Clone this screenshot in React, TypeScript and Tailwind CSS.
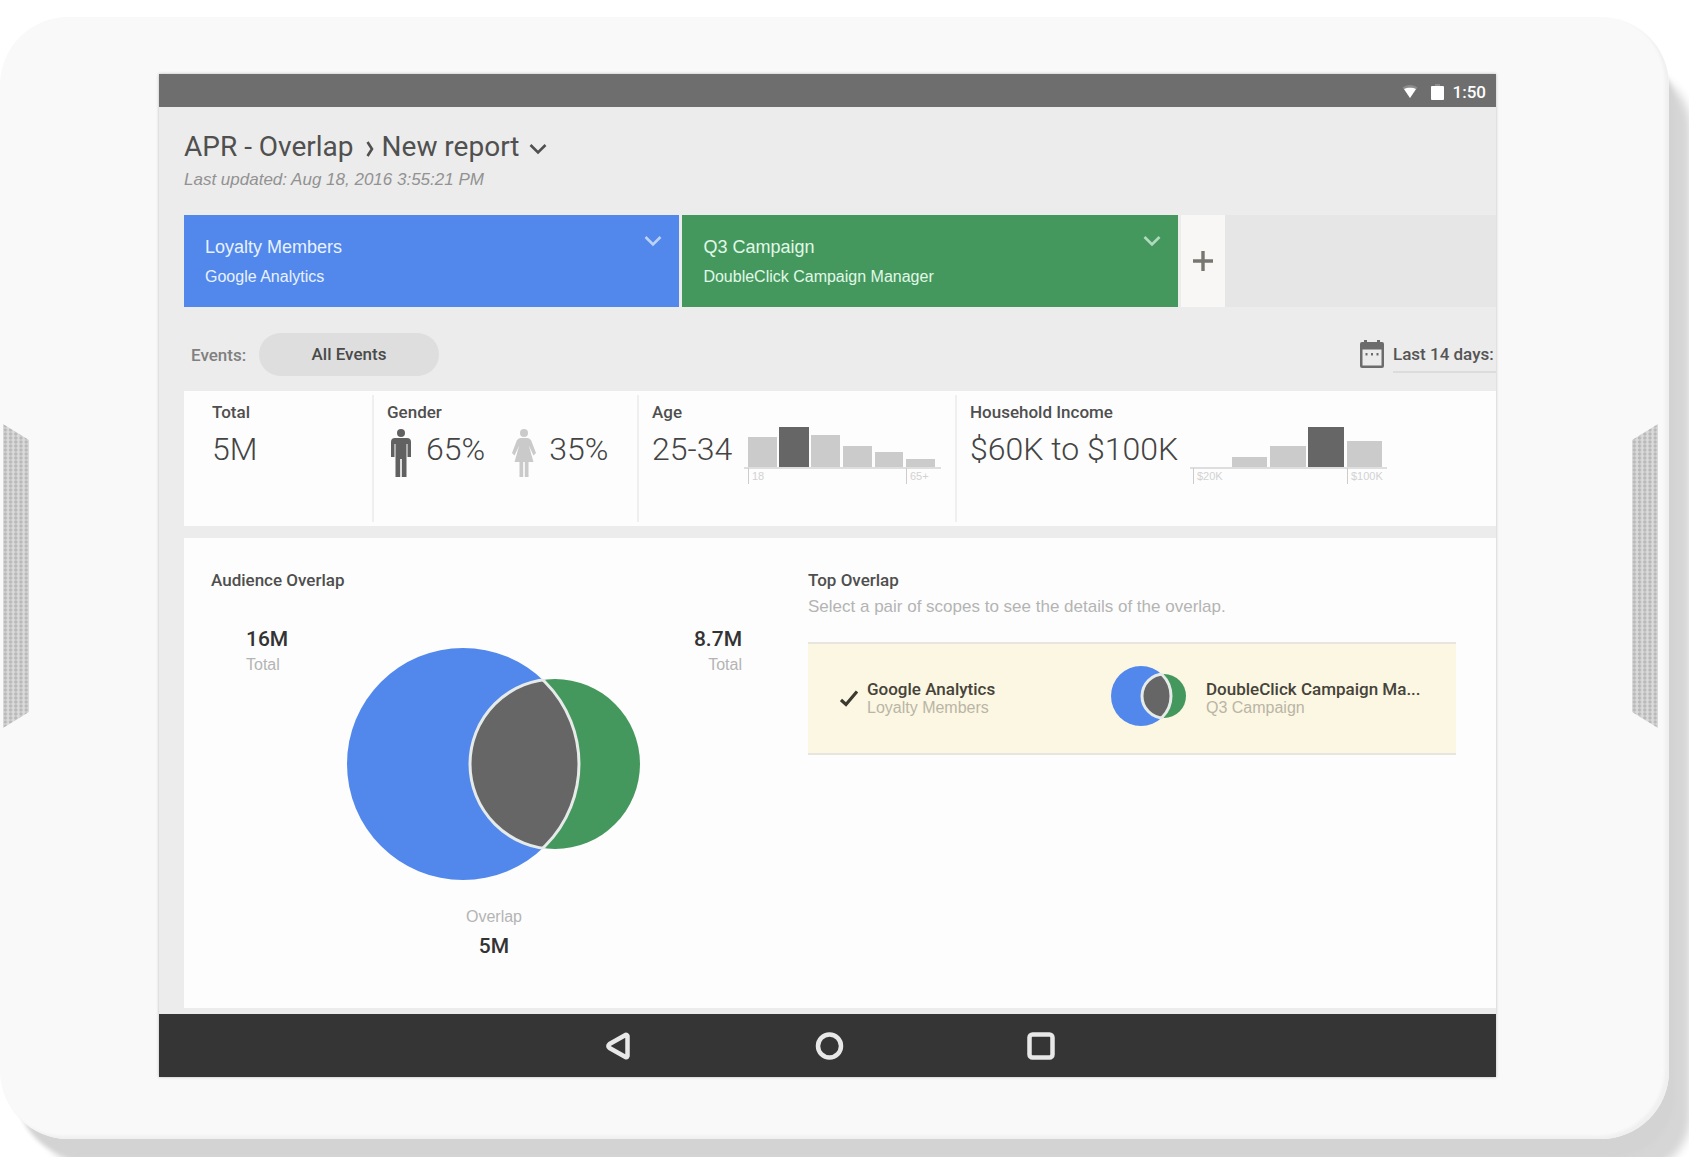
import React from 'react';

const RB = "font-['Roboto',sans-serif]";

type Bar = { x: number; w: number; h: number; active?: boolean };

const ageBars: Bar[] = [
  { x: 4, w: 29, h: 31 },
  { x: 35, w: 30, h: 41, active: true },
  { x: 67, w: 29, h: 33 },
  { x: 99, w: 29, h: 22 },
  { x: 131, w: 28, h: 16 },
  { x: 162, w: 29, h: 9 },
];

const incomeBars: Bar[] = [
  { x: 42, w: 35, h: 11 },
  { x: 80, w: 36, h: 22 },
  { x: 118, w: 36, h: 41, active: true },
  { x: 157, w: 35, h: 27 },
];

function Histogram({ bars, ticks, label }: { bars: Bar[]; ticks: { x: number; text: string }[]; label: string }) {
  return (
    <svg width="197" height="60" viewBox="0 0 197 60" role="img" aria-label={label} className="shrink-0">
      {bars.map((b) => (
        <rect key={b.x} x={b.x} y={42 - b.h} width={b.w} height={b.h} fill={b.active ? '#666666' : '#cbcbcb'} />
      ))}
      <rect x="0" y="41" width="197" height="2" fill="#dedede" />
      {ticks.map((t) => (
        <g key={t.text}>
          <rect x={t.x} y="42" width="1" height="16" fill="#cccccc" />
          <text x={t.x + 4} y="54" fontSize="11" fill="#d2d2d2" fontFamily="Liberation Sans, sans-serif">
            {t.text}
          </text>
        </g>
      ))}
    </svg>
  );
}

type VennProps = {
  id: string;
  width: number;
  height: number;
  a: [number, number, number];
  b: [number, number, number];
  stroke: number;
};

function Venn({ id, width, height, a, b, stroke }: VennProps) {
  return (
    <svg width={width} height={height} viewBox={`0 0 ${width} ${height}`} role="img" aria-label="Overlap of two audiences" className="shrink-0">
      <defs>
        <clipPath id={id + 'a'}>
          <circle cx={a[0]} cy={a[1]} r={a[2] + 1} />
        </clipPath>
        <clipPath id={id + 'b'}>
          <circle cx={b[0]} cy={b[1]} r={b[2] + 1} />
        </clipPath>
      </defs>
      <circle cx={a[0]} cy={a[1]} r={a[2]} fill="#5288ec" />
      <circle cx={b[0]} cy={b[1]} r={b[2]} fill="#45985d" />
      <circle cx={b[0]} cy={b[1]} r={b[2]} fill="#666666" clipPath={`url(#${id}a)`} />
      <g fill="none" stroke="#e6ebea" strokeWidth={stroke}>
        <circle cx={b[0]} cy={b[1]} r={b[2]} clipPath={`url(#${id}a)`} />
        <circle cx={a[0]} cy={a[1]} r={a[2]} clipPath={`url(#${id}b)`} />
      </g>
    </svg>
  );
}

function Chevron({ className }: { className: string }) {
  return (
    <svg width="18" height="13" viewBox="0 0 18 13" fill="none" className={className} aria-hidden="true">
      <path d="M1.5 2 L9 9.5 L16.5 2" stroke="currentColor" strokeWidth="2.6" />
    </svg>
  );
}

function Speaker({ flip }: { flip?: boolean }) {
  const id = flip ? 'dots-right' : 'dots-left';
  return (
    <svg width="26" height="304" viewBox="0 0 26 304" className="shrink-0" aria-hidden="true">
      <defs>
        <pattern id={id} width="5.2" height="4" patternUnits="userSpaceOnUse">
          <rect width="5.2" height="4" fill="#dadada" />
          <circle cx="2.4" cy="2" r="1.7" fill="#b9b9b9" />
        </pattern>
      </defs>
      <path d={flip ? 'M0 16 L26 0 V304 L0 288 Z' : 'M0 0 L26 16 V288 L0 304 Z'} fill={`url(#${id})`} />
    </svg>
  );
}

function Scope({ title, source, tone }: { title: string; source: string; tone: string }) {
  return (
    <button type="button" className={`flex h-[92px] items-start justify-between pl-[21px] pr-[17px] pt-5 text-left ${tone}`}>
      <span>
        <span className="block text-[18px] leading-6">{title}</span>
        <span className="mt-2 block text-[16px] leading-5">{source}</span>
      </span>
      <Chevron className="opacity-70" />
    </button>
  );
}

function Stat({ label, first, children }: { label: string; first?: boolean; children: React.ReactNode }) {
  return (
    <section className={first ? 'my-1 pl-7' : 'my-1 border-l-2 border-[#efefef] pl-[13px]'}>
      <h2 className={`${RB} mt-[7px] text-[17px] font-medium leading-5 text-[#4f4f4f]`}>{label}</h2>
      <div className={`${RB} mt-1 flex items-start whitespace-nowrap text-[32px] font-light leading-[46px] text-[#444444]`}>{children}</div>
    </section>
  );
}

function Figure({ value, align }: { value: string; align: string }) {
  return (
    <div className={`w-[101px] ${align}`}>
      <div className={`${RB} text-[21px] font-medium leading-6 text-[#333333]`}>{value}</div>
      <div className="mt-1 text-[16px] leading-5 text-[#b4b4b4]">Total</div>
    </div>
  );
}

export default function App() {
  return (
    <div className="min-h-screen overflow-hidden bg-white pb-[18px] pr-5 pt-[17px] font-['Liberation_Sans',Arial,sans-serif]">
      <div className="flex items-center rounded-[68px] bg-[#f9f9f9] pb-[62px] pt-[57px] shadow-[inset_-4px_-3px_3px_#f0f0f0,12px_24px_4px_-6px_#d3d3d3,32px_44px_10px_-10px_#d6d6d6]">
        <div className="flex w-[159px] shrink-0 pl-[3px]">
          <Speaker />
        </div>

        <div className="min-w-0 flex-1 bg-[#ececec] shadow-[0_0_3px_#bbbbbb]">
          <header className="flex h-[33px] items-center justify-end bg-[#6e6e6e] pr-[10px] pt-0.5 text-white">
            <svg width="16" height="15" viewBox="0 0 16 15" aria-label="Wi-Fi" className="mr-[13px]">
              <path d="M0.5 3.5 C4.5 0 11.5 0 15.5 3.5 L8 14 Z" fill="#8c8c8c" />
              <path d="M2 5 C5 3.2 11 3.2 14 5 L8 14 Z" fill="#ffffff" />
            </svg>
            <svg width="13" height="16" viewBox="0 0 13 16" aria-label="Battery" className="mr-[9px]">
              <rect x="4" y="0" width="5" height="3" fill="#8c8c8c" />
              <rect x="0" y="2" width="13" height="14" rx="1" fill="#ffffff" />
            </svg>
            <span className={`${RB} text-[17px] font-medium leading-5`}>1:50</span>
          </header>

          <main className="pb-[6px] pl-[25px] pt-[22px]">
            <h1 className={`${RB} flex items-center text-[28px] leading-9 text-[#505050]`}>
              <a href="#overlap">APR - Overlap</a>
              <svg width="8" height="18" viewBox="0 0 8 18" fill="none" className="ml-3 mr-2 mt-1" aria-hidden="true">
                <path d="M1.5 2 L6 9 L1.5 16" stroke="currentColor" strokeWidth="2.6" />
              </svg>
              <button type="button" className="flex items-center gap-[10px]">
                New report
                <Chevron className="mt-1" />
              </button>
            </h1>
            <p className="mt-[5px] text-[17px] italic leading-5 text-[#929292]">Last updated: Aug 18, 2016 3:55:21 PM</p>

            <div className="mt-[25px] grid grid-cols-[495fr_495fr_315fr] gap-[3px]">
              <Scope title="Loyalty Members" source="Google Analytics" tone="bg-[#5288ec] text-[#e8f2ff]" />
              <Scope title="Q3 Campaign" source="DoubleClick Campaign Manager" tone="bg-[#45985d] text-[#e0f8e8]" />
              <div className="flex bg-[#e6e6e6]">
                <button type="button" aria-label="Add scope" className="flex w-11 items-center justify-center bg-[#f8f7f5] text-[#77776f]">
                  <svg width="20" height="20" viewBox="0 0 20 20" aria-hidden="true">
                    <path d="M10 0 V20 M0 10 H20" stroke="currentColor" strokeWidth="3.4" />
                  </svg>
                </button>
              </div>
            </div>

            <div className={`${RB} mt-[26px] flex h-[43px] items-center text-[17px] font-medium`}>
              <span id="events-label" className="w-[69px] pl-[7px] pt-0.5 text-[#808080]">Events:</span>
              <button type="button" className="ml-[6px] h-full w-[180px] rounded-full bg-[#dedede] text-[#4a4a4a]">
                All Events
              </button>
              <button type="button" className="ml-auto flex items-center gap-[9px] whitespace-nowrap text-[#555555]">
                <svg width="24" height="28" viewBox="0 0 24 28" aria-hidden="true" className="-mt-0.5 text-[#6c6c6c]">
                  <path d="M4 0 H7 V2 H17 V0 H20 V2 H22 A2 2 0 0 1 24 4 V26 A2 2 0 0 1 22 28 H2 A2 2 0 0 1 0 26 V4 A2 2 0 0 1 2 2 H4 Z M2.5 9.5 V25.5 H21.5 V9.5 Z" fill="currentColor" fillRule="evenodd" />
                  <path d="M5.5 13 H7.5 V15.5 H5.5 Z M11 13 H13 V15.5 H11 Z M16.5 13 H18.5 V15.5 H16.5 Z" fill="currentColor" />
                </svg>
                <span className="w-[103px] border-b-2 border-[#dcdcdc] pb-1 pt-1 text-left leading-[26px]">Last 14 days:</span>
              </button>
            </div>

            <div className="mt-[15px] grid h-[135px] grid-cols-[188fr_265fr_318fr_541fr] bg-[#fdfdfd]">
              <Stat label="Total" first>
                5M
              </Stat>
              <Stat label="Gender">
                <svg width="20" height="48" viewBox="0 0 20 48" aria-label="Male" className="ml-1 mr-[15px] mt-[3px]">
                  <circle cx="10" cy="4" r="4" fill="#616161" />
                  <path d="M4 9 H16 Q20 9 20 13 V28 H16.5 V15 H15.5 V48 H10.8 V30 H9.2 V48 H4.5 V15 H3.5 V28 H0 V13 Q0 9 4 9 Z" fill="#616161" />
                </svg>
                <span>65%</span>
                <svg width="24" height="48" viewBox="0 0 24 48" aria-label="Female" className="ml-[27px] mr-[13px] mt-[3px]">
                  <circle cx="12" cy="4" r="4" fill="#cacaca" />
                  <path d="M8.5 9 H15.5 Q18 9 19.2 11.5 L24 24 L21.5 26.5 L16.8 16.5 L21.5 33 H16.5 V48 H12.8 V33 H11.2 V48 H7.5 V33 H2.5 L7.2 16.5 L2.5 26.5 L0 24 L4.8 11.5 Q6 9 8.5 9 Z" fill="#cacaca" />
                </svg>
                <span>35%</span>
              </Stat>
              <Stat label="Age">
                <span className="mr-3">25-34</span>
                <Histogram bars={ageBars} ticks={[{ x: 4, text: '18' }, { x: 162, text: '65+' }]} label="Age distribution" />
              </Stat>
              <Stat label="Household Income">
                <span className="mr-3">$60K to $100K</span>
                <Histogram bars={incomeBars} ticks={[{ x: 3, text: '$20K' }, { x: 157, text: '$100K' }]} label="Household income distribution" />
              </Stat>
            </div>

            <div className="mt-3 grid h-[470px] grid-cols-[624fr_688fr] bg-[#fdfdfd] pt-8">
              <section>
                <h2 className={`${RB} pl-[27px] text-[17px] font-medium leading-5 text-[#4f4f4f]`}>Audience Overlap</h2>
                <div className="ml-[62px] mt-[37px] w-[496px]">
                  <div className="flex items-start">
                    <Figure value="16M" align="text-left" />
                    <div className="mt-[21px]">
                      <Venn id="main" width={294} height={233} a={[116, 116, 116]} b={[208, 116, 85]} stroke={3} />
                    </div>
                    <Figure value="8.7M" align="text-right" />
                  </div>
                  <div className="mt-[26px] text-center">
                    <div className="text-[16px] leading-5 text-[#b4b4b4]">Overlap</div>
                    <div className={`${RB} mt-[7px] text-[21px] font-medium leading-6 text-[#333333]`}>5M</div>
                  </div>
                </div>
              </section>

              <section className="pr-10">
                <h2 className={`${RB} text-[17px] font-medium leading-5 text-[#4f4f4f]`}>Top Overlap</h2>
                <p className="mt-[7px] text-[17px] leading-5 text-[#b4b4b4]">Select a pair of scopes to see the details of the overlap.</p>
                <button type="button" aria-pressed="true" className="mt-[25px] flex h-[113px] w-full items-start border-y-2 border-[#e6e6de] bg-[#fcf7e2] pl-8 text-left">
                  <svg width="18" height="17" viewBox="0 0 18 17" fill="none" className="mt-[46px] shrink-0" aria-hidden="true">
                    <path d="M1 10 L6 14.5 L17 1.5" stroke="#3c3a30" strokeWidth="3.2" />
                  </svg>
                  <span className="ml-[9px] mt-[35px] w-[244px]">
                    <span className={`${RB} block text-[17px] font-medium leading-5 text-[#45433a]`}>Google Analytics</span>
                    <span className="block text-[16px] leading-[18px] text-[#b9b5a6]">Loyalty Members</span>
                  </span>
                  <span className="mt-[22px]">
                    <Venn id="pair" width={76} height={60} a={[30, 30, 30]} b={[53, 30, 22]} stroke={3} />
                  </span>
                  <span className="ml-[19px] mt-[35px]">
                    <span className={`${RB} block text-[17px] font-medium leading-5 text-[#45433a]`}>DoubleClick Campaign Ma...</span>
                    <span className="block text-[16px] leading-[18px] text-[#b9b5a6]">Q3 Campaign</span>
                  </span>
                </button>
              </section>
            </div>
          </main>

          <nav aria-label="System" className="flex h-[63px] items-center justify-center gap-[180px] bg-[#353535] text-[#e8e8e8]">
            <button type="button" aria-label="Back">
              <svg width="32" height="32" viewBox="0 0 32 32" fill="none" stroke="currentColor" strokeWidth="4.5" strokeLinejoin="round">
                <path d="M27.5 6 V26 Q27 27.5 25.5 27 L9.5 18 Q7.5 16 9.5 14 L25.5 5 Q27 4.5 27.5 6 Z" />
              </svg>
            </button>
            <button type="button" aria-label="Home">
              <svg width="32" height="32" viewBox="0 0 32 32" fill="none" stroke="currentColor" strokeWidth="4.5">
                <circle cx="17.5" cy="16" r="11.5" />
              </svg>
            </button>
            <button type="button" aria-label="Recent apps">
              <svg width="32" height="32" viewBox="0 0 32 32" fill="none" stroke="currentColor" strokeWidth="4.5">
                <rect x="5.5" y="4.5" width="23" height="23" rx="3" />
              </svg>
            </button>
          </nav>
        </div>

        <div className="flex w-[173px] shrink-0 justify-end pr-[11px]">
          <Speaker flip />
        </div>
      </div>
    </div>
  );
}
